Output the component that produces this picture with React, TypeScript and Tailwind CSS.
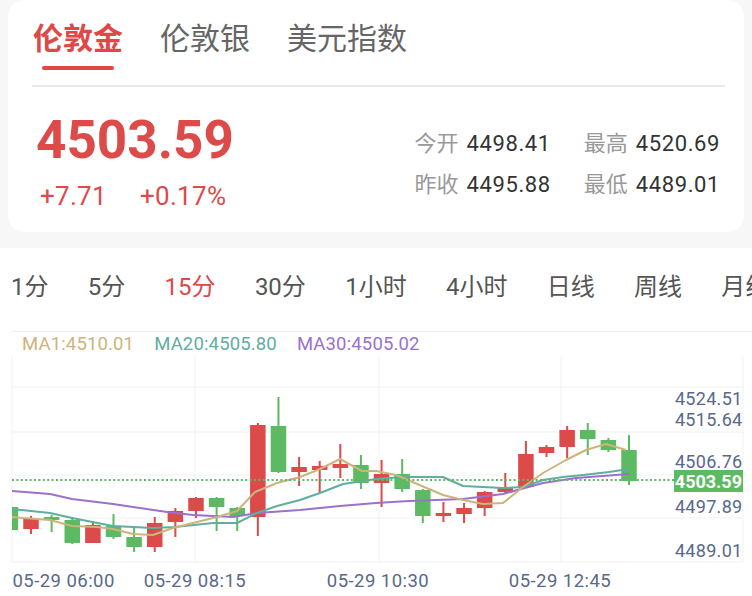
import React from 'react'

const RED = '#dc4a4a'
const GREEN = '#5cba62'
const AXIS = '#58698a'

// [colour, bodyTop, bodyBottom, wickTop, wickBottom] in page pixels
const CANDLES: ['r' | 'g', number, number, number, number][] = [
  ['g', 507, 530, 505, 531],
  ['r', 519, 529, 516, 534],
  ['g', 517, 520, 515, 532],
  ['g', 520, 543, 517, 544],
  ['r', 525, 543, 521, 543],
  ['g', 526, 537, 514, 539],
  ['g', 537, 547, 526, 552],
  ['r', 523, 547, 517, 552],
  ['r', 511, 522, 508, 537],
  ['r', 498, 511, 497, 518],
  ['g', 498, 507, 497, 531],
  ['g', 508, 516, 507, 531],
  ['r', 425, 517, 423, 536],
  ['g', 426, 472, 397, 473],
  ['r', 467, 472, 457, 486],
  ['r', 466, 470, 461, 493],
  ['r', 464, 468, 444, 478],
  ['g', 465, 483, 455, 489],
  ['r', 474, 483, 460, 507],
  ['g', 474, 489, 459, 492],
  ['g', 490, 516, 489, 523],
  ['r', 513, 516, 502, 522],
  ['r', 508, 514, 503, 523],
  ['r', 492, 508, 491, 516],
  ['r', 487, 492, 473, 493],
  ['r', 454, 487, 441, 488],
  ['r', 447, 453, 445, 457],
  ['r', 430, 447, 426, 458],
  ['g', 430, 439, 423, 455],
  ['g', 440, 450, 438, 452],
  ['g', 450, 481, 435, 485],
]

const MA1 =
  '12,517 23,518 50,520 72,526 97,527 113,529 133,534 153,535 173,528 193,523 217,517 237,511 255,492 277,483 300,477 320,469 340,459 362,471 376,471 396,475 443,495 463,500 483,504 503,503 523,487 543,473 566,460 586,450 606,444 626,450'
const MA20 =
  '12,509 50,513 72,518 113,526 153,528 175,527 213,523 237,523 257,513 277,506 300,500 320,493 343,484 376,479 403,477 443,477 463,486 503,488 523,487 543,480 563,477 583,475 609,472 629,469'
const MA30 =
  '12,491 50,494 72,499 113,504 133,507 167,512 193,515 233,517 257,513 300,510 340,506 376,503 409,501 463,499 503,494 543,483 576,478 629,474'

const PERIODS = ['1分', '5分', '15分', '30分', '1小时', '4小时', '日线', '周线', '月线']

function Chart() {
  return (
    <svg width={752} height={240} viewBox="0 356 752 240" className="block">
      <defs>
        <clipPath id="plot">
          <rect x={12} y={356} width={731} height={206} />
        </clipPath>
      </defs>
      {/* grid */}
      {[387, 432, 475, 518, 562].map(y => (
        <line key={y} x1={12} x2={743} y1={y} y2={y} stroke="#f1f1f1" strokeWidth={1} />
      ))}
      {[12, 195, 379, 561, 743].map(x => (
        <line key={x} x1={x} x2={x} y1={356} y2={562} stroke="#f1f1f1" strokeWidth={1} />
      ))}

      <g clipPath="url(#plot)">
        {CANDLES.map(([c, bt, bb, wt, wb], i) => {
          const x = 10.4 + i * 20.62
          const fill = c === 'r' ? RED : GREEN
          return (
            <g key={i}>
              <rect x={x - 1} y={wt} width={2} height={wb - wt} fill={fill} />
              <rect x={x - 7.75} y={bt} width={15.5} height={Math.max(bb - bt, 2)} fill={fill} />
            </g>
          )
        })}
        <polyline points={MA30} fill="none" stroke="#9a72cc" strokeWidth={2} strokeLinejoin="round" />
        <polyline points={MA20} fill="none" stroke="#5fae9f" strokeWidth={2} strokeLinejoin="round" />
        <polyline points={MA1} fill="none" stroke="#cdb37c" strokeWidth={2} strokeLinejoin="round" />
      </g>

      <line x1={12} x2={674} y1={480} y2={480} stroke={GREEN} strokeWidth={2} strokeDasharray="2 2.4" />

      {/* price axis */}
      <g fontFamily="Roboto, sans-serif" fontSize={18} fill={AXIS} textAnchor="end" letterSpacing={0.3}>
        <text x={742.5} y={405}>4524.51</text>
        <text x={742.5} y={426}>4515.64</text>
        <text x={742.5} y={468}>4506.76</text>
        <text x={742.5} y={513}>4497.89</text>
        <text x={742.5} y={557}>4489.01</text>
      </g>
      <rect x={674} y={470} width={69} height={22} fill={GREEN} />
      <text x={742} y={488} fontFamily="Roboto, sans-serif" fontSize={18} fontWeight={700} fill="#fff" textAnchor="end">
        4503.59
      </text>

      {/* time axis */}
      <g fontFamily="Roboto, sans-serif" fontSize={18.5} fill={AXIS} letterSpacing={0.45}>
        <text x={12.5} y={587}>05-29 06:00</text>
        <text x={195} y={587} textAnchor="middle">05-29 08:15</text>
        <text x={378} y={587} textAnchor="middle">05-29 10:30</text>
        <text x={560} y={587} textAnchor="middle">05-29 12:45</text>
      </g>
    </svg>
  )
}

export default function App() {
  return (
    <div
      className="w-[752px] h-[596px] overflow-hidden bg-white"
      style={{ fontFamily: 'Roboto, "Noto Sans CJK SC", sans-serif' }}
    >
      {/* Quote card */}
      <div className="bg-[#f7f7f7] pb-4">
        <div className="mx-2 h-[232px] rounded-2xl bg-white">
          {/* Instrument tabs */}
          <div className="flex items-start gap-[37px] pl-[25px] pt-[21px]">
            <div className="flex flex-col items-center">
              <span className="text-[30px] leading-[36px] font-bold text-[#e04848]">伦敦金</span>
              <div className="mt-[9px] h-[4px] w-[72px] rounded-full bg-[#e04848]" />
            </div>
            <span className="text-[30px] leading-[36px] text-[#666]">伦敦银</span>
            <span className="text-[30px] leading-[36px] text-[#666]">美元指数</span>
          </div>
          <div className="ml-6 mr-[19px] mt-[15px] h-[2px] bg-[#e9e9e9]" />

          {/* Price */}
          <div className="flex justify-between pl-[28px] pr-6 pt-[26px]">
            <div>
              <div className="text-[53px] leading-[54px] font-bold text-[#dc4a4a]">4503.59</div>
              <div className="ml-[4px] mt-[16px] flex gap-[33px] text-[26px] leading-[26px] tracking-[0.3px] text-[#dc4a4a]">
                <span>+7.71</span>
                <span>+0.17%</span>
              </div>
            </div>
            <div className="mt-[15px] grid grid-cols-[auto_auto] gap-x-[33px] text-[22px] leading-[32px]">
              <div className="flex gap-[8px]">
                <span className="text-[#999]">今开</span>
                <span className="tracking-[0.6px] text-[#333]">4498.41</span>
              </div>
              <div className="flex gap-[8px]">
                <span className="text-[#999]">最高</span>
                <span className="tracking-[0.6px] text-[#333]">4520.69</span>
              </div>
              <div className="flex gap-[8px]">
                <span className="text-[#999]">昨收</span>
                <span className="tracking-[0.6px] text-[#333]">4495.88</span>
              </div>
              <div className="flex gap-[8px]">
                <span className="text-[#999]">最低</span>
                <span className="tracking-[0.6px] text-[#333]">4489.01</span>
              </div>
            </div>
          </div>
        </div>
      </div>

      {/* Period tabs */}
      <div className="flex gap-[39.3px] whitespace-nowrap pl-[11px] pt-[23px] text-[24px] leading-[32px] text-[#555]">
        {PERIODS.map(p => (
          <span key={p} className={p === '15分' ? 'text-[#e04848]' : ''}>
            {p}
          </span>
        ))}
      </div>

      {/* Chart */}
      <div className="ml-3 mt-[28px] border-t border-[#f0f0f0]">
        <div className="flex gap-5 pl-[10px] text-[18.5px] leading-[24px] tracking-[0.15px]">
          <span className="text-[#cdb37c]">MA1:4510.01</span>
          <span className="text-[#5fae9f]">MA20:4505.80</span>
          <span className="text-[#9a72cc]">MA30:4505.02</span>
        </div>
      </div>
      <Chart />
    </div>
  )
}
